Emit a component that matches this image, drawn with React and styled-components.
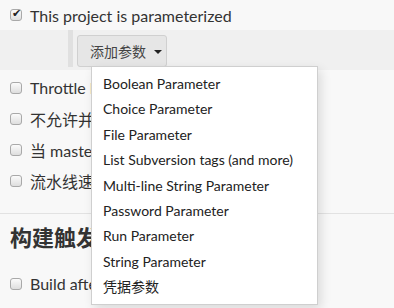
import React from "react";
import styled, { createGlobalStyle } from "styled-components";

const GlobalStyle = createGlobalStyle`
  html, body {
    margin: 0;
    padding: 0;
    background: #f8f8f8;
  }
  body {
    font-family: Lato, "Noto Sans CJK SC", sans-serif;
    color: #333;
  }
`;

const Page = styled.div`
  width: 394px;
  height: 308px;
  overflow: hidden;
  position: relative;
  background: #f8f8f8;
`;

const CheckRow = styled.label`
  display: flex;
  align-items: center;
  gap: 8px;
  height: ${(p) => p.h || 31}px;
  padding-left: 10px;
  font-size: 16px;
  color: #333;
  white-space: nowrap;
`;

const Box = styled.input.attrs({ type: "checkbox" })`
  appearance: none;
  margin: 0;
  width: 12px;
  height: 12px;
  border: 1px solid #a9a9a9;
  border-radius: 3px;
  background: linear-gradient(#fbfbfb, #dedede);
  box-sizing: border-box;
  position: relative;
  flex-shrink: 0;

  &:checked::after {
    content: "✔";
    position: absolute;
    left: 1px;
    top: -3px;
    font-size: 11px;
    color: #222;
    font-family: "DejaVu Sans", sans-serif;
  }
`;

const Band = styled.div`
  display: flex;
  height: 40px;
  background: #f0f0f0;
  padding-left: 68px;
  box-sizing: border-box;
`;

const Bar = styled.div`
  width: 5px;
  height: 37px;
  background: #e0e0e0;
  margin-right: 4px;
`;

const ButtonWrap = styled.div`
  position: relative;
  padding-top: 5px;
`;

const AddButton = styled.button`
  display: flex;
  align-items: center;
  gap: 8px;
  height: 32px;
  width: 90px;
  padding: 0 12px;
  box-sizing: border-box;
  background: #e6e6e6;
  border: 1px solid #d0d0d0;
  border-radius: 3px;
  font-family: "Noto Sans CJK SC", sans-serif;
  font-size: 14px;
  color: #444;
  white-space: nowrap;
`;

const Caret = styled.span`
  width: 0;
  height: 0;
  border-left: 4px solid transparent;
  border-right: 4px solid transparent;
  border-top: 4px solid #222;
  margin-top: 1px;
`;

const Menu = styled.ul`
  position: absolute;
  left: 14px;
  top: 36px;
  width: 227px;
  margin: 0;
  padding: 4px 0;
  list-style: none;
  background: #fff;
  border: 1px solid #cfcfcf;
  box-sizing: border-box;
  box-shadow: 3px 4px 10px rgba(0, 0, 0, 0.12);
  z-index: 10;
`;

const MenuItem = styled.li`
  height: 25.4px;
  line-height: 25.4px;
  padding-left: 11px;
  font-size: 14px;
  color: #222;
  white-space: nowrap;
`;

const Rows = styled.div`
  padding-top: 2px;
`;

const Divider = styled.div`
  height: 1px;
  background: #e2e2e2;
  margin-top: 17px;
`;

const Heading = styled.h2`
  margin: 0 0 10px;
  padding-left: 10px;
  height: 44px;
  display: flex;
  align-items: center;
  font-size: 22px;
  font-weight: 700;
  font-family: "Noto Sans CJK SC", sans-serif;
  color: #333;
  white-space: nowrap;
`;

const items = [
  "Boolean Parameter",
  "Choice Parameter",
  "File Parameter",
  "List Subversion tags (and more)",
  "Multi-line String Parameter",
  "Password Parameter",
  "Run Parameter",
  "String Parameter",
  "凭据参数",
];

const App = () => {
  return (
    <Page>
      <GlobalStyle />
      <CheckRow h={30}>
        <Box defaultChecked />
        This project is parameterized
      </CheckRow>
      <Band>
        <Bar />
        <ButtonWrap>
          <AddButton>
            添加参数
            <Caret />
          </AddButton>
          <Menu>
            {items.map((t) => (
              <MenuItem key={t}>{t}</MenuItem>
            ))}
          </Menu>
        </ButtonWrap>
      </Band>
      <Rows>
        <CheckRow>
          <Box />
          Throttle builds
        </CheckRow>
        <CheckRow>
          <Box />
          不允许并发构建
        </CheckRow>
        <CheckRow>
          <Box />
          当 master 重启后不允许恢复流水线
        </CheckRow>
        <CheckRow>
          <Box />
          流水线速度/持久性覆盖
        </CheckRow>
      </Rows>
      <Divider />
      <Heading>构建触发器</Heading>
      <CheckRow>
        <Box />
        Build after other projects are built
      </CheckRow>
    </Page>
  );
};

export default App;
